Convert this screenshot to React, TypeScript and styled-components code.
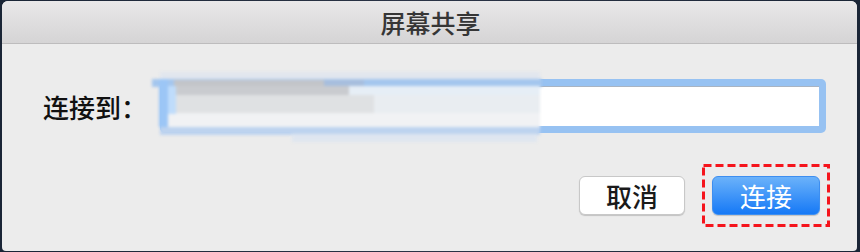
import React from 'react';
import styled, { createGlobalStyle } from 'styled-components';

const GlobalStyle = createGlobalStyle`
  html, body {
    margin: 0;
    padding: 0;
    background: #1d2838;
  }
  body {
    font-family: "Noto Sans CJK SC", "Noto Sans", sans-serif;
  }
`;

const Page = styled.div`
  width: 860px;
  height: 252px;
  padding: 1px 3px 1px 2px;
  box-sizing: border-box;
  background: linear-gradient(90deg, #1a2536, #2b3446 50%, #1a2536);
`;

const Window = styled.div`
  height: 100%;
  background: #ececec;
  border-radius: 6px 6px 4px 4px;
  overflow: hidden;
  display: flex;
  flex-direction: column;
`;

const TitleBar = styled.div`
  height: 42px;
  flex-shrink: 0;
  background: linear-gradient(#e9e8e9, #d5d4d5);
  border-bottom: 1px solid #bdbcbd;
  display: flex;
  align-items: center;
  justify-content: center;
  font-size: 25px;
  font-weight: 500;
  color: #363636;
  padding-left: 2px;
`;

const Body = styled.div`
  flex: 1;
  padding: 35px 37px 0 41px;
  display: flex;
  flex-direction: column;
`;

const FieldRow = styled.div`
  display: flex;
  align-items: center;
  height: 54px;
`;

const Label = styled.div`
  width: 117px;
  font-size: 26px;
  font-weight: 500;
  color: #111;
  line-height: 1;
  padding-top: 1px;
`;

const FocusRing = styled.div`
  position: relative;
  flex: 1;
  height: 54px;
  margin-right: -6px;
  box-sizing: border-box;
  padding: 7px;
  background: #97c2f2;
  border-radius: 5px;
`;

const Field = styled.div`
  height: 100%;
  background: #fff;
  border-top: 1px solid #a9b4c2;
  box-sizing: border-box;
`;

const Mosaic = styled.div`
  position: absolute;
  left: -8px;
  top: -7px;
  width: 390px;
  height: 71px;
  filter: blur(1.5px);
`;

const Block = styled.div<{ $x: number; $y: number; $w: number; $h: number; $c: string }>`
  position: absolute;
  left: ${p => p.$x}px;
  top: ${p => p.$y}px;
  width: ${p => p.$w}px;
  height: ${p => p.$h}px;
  background: ${p => p.$c};
`;

const ButtonRow = styled.div`
  display: flex;
  justify-content: flex-end;
  gap: 27px;
  margin-top: 43px;
`;

const Button = styled.button<{ $primary?: boolean }>`
  width: ${p => (p.$primary ? 108 : 106)}px;
  height: 39px;
  border-radius: 6px;
  font-family: inherit;
  font-size: 26px;
  font-weight: ${p => (p.$primary ? 400 : 500)};
  line-height: 1;
  padding: 0;
  cursor: pointer;
  color: ${p => (p.$primary ? '#fff' : '#1a1a1a')};
  border: 1px solid ${p => (p.$primary ? '#3d8ef0' : '#c8c8c8')};
  background: ${p => (p.$primary ? 'linear-gradient(#6bb2fa, #1679f6)' : '#fff')};
  box-shadow: 0 1px 1px rgba(0, 0, 0, 0.18);
`;

const Highlight = styled.div`
  position: relative;
  display: flex;
`;

const Dashed = styled.svg`
  position: absolute;
  left: -10px;
  top: -12px;
  width: 128px;
  height: 63px;
  overflow: visible;
`;

const blocks = [
  { x: 8, y: 0, w: 380, h: 8, c: '#e1e6ee' },
  { x: 0, y: 7, w: 390, h: 8, c: '#a4c6ee' },
  { x: 22, y: 8, w: 150, h: 8, c: '#c3c5c9' },
  { x: 172, y: 8, w: 40, h: 8, c: '#a7bedd' },
  { x: 8, y: 14, w: 380, h: 10, c: '#e6eef6' },
  { x: 22, y: 14, w: 175, h: 10, c: '#c9cbcf' },
  { x: 8, y: 23, w: 380, h: 18, c: '#e9edf1' },
  { x: 22, y: 23, w: 200, h: 18, c: '#dfe1e3' },
  { x: 8, y: 41, w: 380, h: 15, c: '#f1f2f4' },
  { x: 8, y: 55, w: 380, h: 8, c: '#bdd3ef' },
  { x: 140, y: 62, w: 245, h: 8, c: '#dfe6f0' },
  { x: 7, y: 7, w: 9, h: 48, c: '#9cc6f6' },
  { x: 16, y: 14, w: 8, h: 28, c: '#bfdcfb' },
];

export default function App() {
  return (
    <>
      <GlobalStyle />
      <Page>
        <Window>
          <TitleBar>屏幕共享</TitleBar>
          <Body>
            <FieldRow>
              <Label>连接到：</Label>
              <FocusRing>
                <Field />
                <Mosaic>
                  {blocks.map((b, i) => (
                    <Block key={i} $x={b.x} $y={b.y} $w={b.w} $h={b.h} $c={b.c} />
                  ))}
                </Mosaic>
              </FocusRing>
            </FieldRow>
            <ButtonRow>
              <Button>取消</Button>
              <Highlight>
                <Button $primary>连接</Button>
                <Dashed viewBox="0 0 128 63">
                  <rect
                    x="1.5"
                    y="1.5"
                    width="125"
                    height="60"
                    fill="none"
                    stroke="#f5141c"
                    strokeWidth="3"
                    strokeDasharray="8 4"
                  />
                </Dashed>
              </Highlight>
            </ButtonRow>
          </Body>
        </Window>
      </Page>
    </>
  );
}
